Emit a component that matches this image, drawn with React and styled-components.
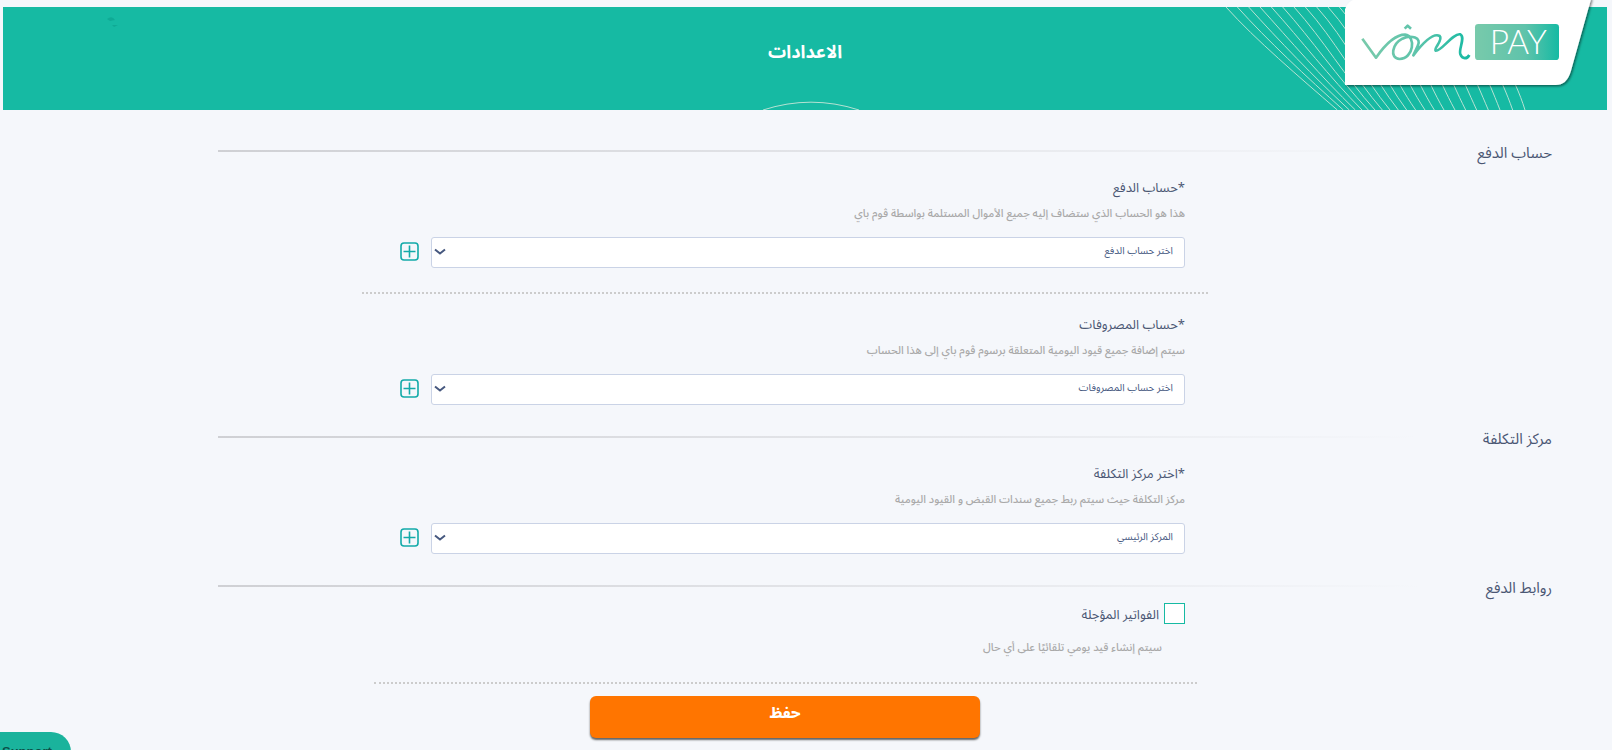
import React, { useState } from 'react';
import styled, { createGlobalStyle } from 'styled-components';

const GlobalStyle = createGlobalStyle`
  * {
    box-sizing: border-box;
  }

  body {
    margin: 0;
    background-color: #f5f7fb;
    font-family: "Noto Sans Arabic", "DejaVu Sans", sans-serif;
    color: #4a5673;
    overflow: hidden;
  }
`;

const Page = styled.div`
  direction: rtl;
  min-height: 100vh;
  padding-top: 7px;
`;

const Header = styled.header`
  position: relative;
  height: 103px;
  margin: 0 5px 0 3px;
  padding-top: 29px;
  background-color: #16baa3;
`;

const Title = styled.h1`
  margin: 0;
  font-size: 18px;
  font-weight: 700;
  line-height: 32px;
  text-align: center;
  color: #ffffff;
`;

const Waves = styled.svg`
  position: absolute;
  top: 0;
  right: 0;
`;

const Arc = styled.svg`
  position: absolute;
  bottom: 0;
  left: 50%;
  margin-left: -44px;
`;

const Leaf = styled.svg`
  position: absolute;
  top: 9px;
  left: 103px;
`;

const LogoLink = styled.a`
  position: absolute;
  top: -7px;
  right: 7px;
`;

const LogoImage = styled.svg`
  display: block;
  direction: ltr;
`;

const SectionHeading = styled.div`
  display: flex;
  align-items: center;
  gap: 64px;
  height: 24px;
  margin: ${({ first }) => (first ? '29px' : '20px')} 60px ${({ tight }) => (tight ? '5px' : '13px')} 218px;
`;

const SectionTitle = styled.h2`
  margin: 0;
  padding-top: 4px;
  font-size: 15px;
  font-weight: 400;
  line-height: 24px;
  white-space: nowrap;
`;

const Rule = styled.div`
  flex: 1;
  height: 2px;
  background: linear-gradient(to right, #cfd0d4, rgba(207, 208, 212, 0));
`;

const Fields = styled.div`
  margin: 0 404px 0 362px;
`;

const Field = styled.div`
  padding: 0 23px 0 38px;
`;

const Label = styled.label`
  display: block;
  font-size: 13px;
  line-height: 24px;
`;

const Hint = styled.p`
  margin: 3px 0 13px;
  font-size: 11px;
  font-weight: 500;
  line-height: 21px;
  color: #a9a9a9;
`;

const Controls = styled.div`
  display: flex;
  align-items: center;
  gap: 12px;
`;

const SelectBox = styled.div`
  position: relative;
  flex: 1;
`;

const StyledSelect = styled.select`
  display: block;
  width: 100%;
  height: 31px;
  padding: 0 11px 4px 24px;
  border: 1px solid #cad3e6;
  border-radius: 3px;
  appearance: none;
  background-color: #ffffff;
  font-family: inherit;
  font-size: 10px;
  color: #46587f;
`;

const Chevron = styled.svg`
  position: absolute;
  top: 11px;
  left: 3px;
  pointer-events: none;
`;

const AddButton = styled.button`
  display: flex;
  width: 19px;
  height: 21px;
  padding: 0;
  border: 0;
  background: none;
  cursor: pointer;
`;

const Dotted = styled.hr`
  margin: ${({ narrow }) => (narrow ? '24px 11px 12px 12px' : '24px 0 19px')};
  border: 0;
  border-top: 2px dotted #cccccc;
`;

const CheckRow = styled.div`
  display: flex;
  align-items: center;
  gap: 5px;
  height: 21px;
  margin-right: 23px;
`;

const CheckLabel = styled(Label)`
  padding-top: 2px;
`;

const Checkbox = styled.input`
  width: 21px;
  height: 21px;
  margin: 0;
  border: 1px solid #16baa3;
  appearance: none;
  background-color: ${({ checked }) => (checked ? '#16baa3' : '#ffffff')};
`;

const CheckHint = styled(Hint)`
  margin: 13px 46px 0 0;
`;

const SaveButton = styled.button`
  display: block;
  width: 46%;
  height: 42px;
  margin: 0 auto;
  padding: 0 0 8px;
  border: 0;
  border-radius: 6px;
  background-color: #ff7500;
  box-shadow: 0 2px 2px rgba(0, 0, 0, 0.6);
  font-family: inherit;
  font-size: 15px;
  font-weight: 800;
  color: #ffffff;
  cursor: pointer;
`;

const Support = styled.button`
  position: fixed;
  left: -20px;
  bottom: -22px;
  width: 91px;
  height: 40px;
  padding: 0 0 2px 22px;
  border: 0;
  border-radius: 20px;
  background-color: #1ab39c;
  direction: ltr;
  font-family: "Liberation Sans", sans-serif;
  font-size: 13px;
  font-weight: 700;
  text-align: left;
  color: #0c4f48;
`;

const waveEnds = [
  412, 430, 448, 466, 486, 505, 525, 547, 570, 595, 620,
  647, 675, 703, 732, 765, 797, 830, 865, 900, 938, 975,
];

const wavePath = (end, i) => {
  const start = 78 + 34 * i;
  const slope = 115 - i * 4;
  return `M${start} 0 C${start + 90} 100 ${end - slope} 209 ${end} 309`;
};

const HeaderWaves = () => (
  <Waves width="407" height="103" viewBox="0 0 1221 309" fill="none" stroke="#b5e2d3" strokeWidth="3" aria-hidden="true">
    {waveEnds.map((end, i) => <path key={end} d={wavePath(end, i)} />)}
  </Waves>
);

const Logo = () => (
  <LogoImage width="255" height="94" viewBox="0 0 765 282" role="img" aria-label="vôm PAY">
    <defs>
      <linearGradient id="ink" x1="50" x2="375" y1="0" y2="0" gradientUnits="userSpaceOnUse">
        <stop offset="0" stopColor="#79caab" />
        <stop offset="0.5" stopColor="#5fc4ab" />
        <stop offset="1" stopColor="#16baa3" />
      </linearGradient>
      <linearGradient id="badge">
        <stop offset="0" stopColor="#78caab" />
        <stop offset="0.6" stopColor="#5fc3ab" />
        <stop offset="1" stopColor="#16baa3" />
      </linearGradient>
      <filter id="shadow" x="-5%" y="-5%" width="110%" height="115%">
        <feDropShadow dx="4" dy="4" stdDeviation="3" floodColor="#000000" floodOpacity="0.5" />
      </filter>
    </defs>
    <path
      d="M0 255 V28 Q6 2 40 -6 H739 L678 212 Q666 255 632 255 Z"
      fill="#ffffff"
      filter="url(#shadow)"
    />
    <g fill="none" stroke="url(#ink)" strokeWidth="8" strokeLinejoin="round">
      <path d="M52 116 L93 173 C112 146 144 104 180 104 C214 108 206 176 164 177 C132 174 142 132 172 116 C198 104 232 112 218 138 L205 166 C228 136 262 96 284 108 C296 120 264 146 272 152 C288 156 324 98 346 103 C362 112 340 148 346 163 C352 178 366 178 373 165" />
      <path d="M179 86 L188 77 L198 86" />
    </g>
    <rect x="390" y="72" width="252" height="108" rx="10" fill="url(#badge)" />
    <text x="520" y="163" textAnchor="middle" fontFamily="Lato, sans-serif" fontWeight="300" fontSize="100" fill="#ffffff">PAY</text>
  </LogoImage>
);

const SelectField = ({ id, label, hint, options }) => (
  <Field>
    <Label htmlFor={id}>*{label}</Label>
    <Hint>{hint}</Hint>
    <Controls>
      <SelectBox>
        <StyledSelect id={id}>
          {options.map(option => <option key={option}>{option}</option>)}
        </StyledSelect>
        <Chevron width="12" height="8" viewBox="0 0 12 8" fill="none" stroke="#46587f" strokeWidth="2">
          <path d="M1 1.5 L6 5.5 L11 1.5" />
        </Chevron>
      </SelectBox>
      <AddButton type="button" aria-label="إضافة">
        <svg width="19" height="19" viewBox="0 0 19 19" fill="none" stroke="#13aaa9" strokeWidth="1.6">
          <rect x="1" y="1" width="17" height="17" rx="3" />
          <path d="M9.5 3.5 V15.5 M3.5 9.5 H15.5" />
        </svg>
      </AddButton>
    </Controls>
  </Field>
);

const Heading = ({ children, ...rest }) => (
  <SectionHeading {...rest}>
    <SectionTitle>{children}</SectionTitle>
    <Rule />
  </SectionHeading>
);

const App = () => {
  const [deferred, setDeferred] = useState(false);

  return (
    <Page>
      <GlobalStyle />
      <Header>
        <HeaderWaves />
        <Leaf width="16" height="14" viewBox="0 0 16 14" fill="#0faa95" aria-hidden="true">
          <path d="M1 3 Q6 -1 9 4 L4 5 Z" />
          <path d="M6 9 L12 9 L8 11 Z" />
        </Leaf>
        <Arc width="100" height="9" viewBox="0 0 100 9" fill="none" stroke="#b5e2d3" aria-hidden="true">
          <path d="M2 9 A155 155 0 0 1 98 9" />
        </Arc>
        <Title>الاعدادات</Title>
        <LogoLink href="#">
          <Logo />
        </LogoLink>
      </Header>

      <main>
        <Heading first>حساب الدفع</Heading>
        <Fields>
          <SelectField
            id="payment-account"
            label="حساب الدفع"
            hint="هذا هو الحساب الذي ستضاف إليه جميع الأموال المستلمة بواسطة ڤوم باي"
            options={['اختر حساب الدفع']}
          />
          <Dotted />
          <SelectField
            id="expense-account"
            label="حساب المصروفات"
            hint="سيتم إضافة جميع قيود اليومية المتعلقة برسوم ڤوم باي إلى هذا الحساب"
            options={['اختر حساب المصروفات']}
          />
        </Fields>

        <Heading>مركز التكلفة</Heading>
        <Fields>
          <SelectField
            id="cost-center"
            label="اختر مركز التكلفة"
            hint="مركز التكلفة حيث سيتم ربط جميع سندات القبض و القيود اليومية"
            options={['المركز الرئيسي']}
          />
        </Fields>

        <Heading tight>روابط الدفع</Heading>
        <Fields>
          <CheckRow>
            <Checkbox
              type="checkbox"
              id="deferred"
              checked={deferred}
              onChange={() => setDeferred(!deferred)}
            />
            <CheckLabel htmlFor="deferred">الفواتير المؤجلة</CheckLabel>
          </CheckRow>
          <CheckHint>سيتم إنشاء قيد يومي تلقائيًا على أي حال</CheckHint>
          <Dotted narrow />
          <SaveButton type="button">حفظ</SaveButton>
        </Fields>
      </main>

      <Support type="button">Support</Support>
    </Page>
  );
};

export default App;
